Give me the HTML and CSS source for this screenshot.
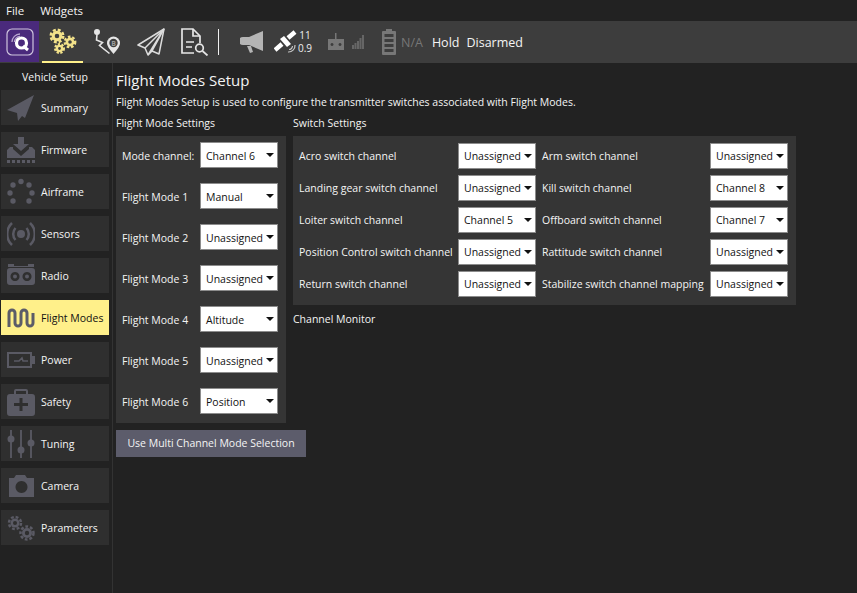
FILE: index.html
```html
<!DOCTYPE html>
<html lang="en">
<head>
  <meta charset="UTF-8">
  <meta name="viewport" content="width=device-width, initial-scale=1.0">
  <title>Flight Modes Setup</title>
  <link rel="stylesheet" href="styles.css">
</head>
<body>

<!-- Menu bar -->
<div class="menu-bar">
  <span class="menu-item">File</span>
  <span class="menu-item">Widgets</span>
</div>

<!-- Toolbar -->
<div class="toolbar">
  <div class="logo-box">
    <svg width="28" height="28" viewBox="0 0 28 28" fill="none">
      <rect x="1" y="1" width="26" height="26" rx="5" stroke="#cfc5de" stroke-width="1.2"/>
      <circle cx="15.500" cy="15" r="5" stroke="#fff" stroke-width="3.200"/>
      <path d="M17 18l5 4" stroke="#fff" stroke-width="3"/>
      <path d="M6 14a8 8 0 0 1 8-8M8.500 14a5.500 5.500 0 0 1 5.500-5.500" stroke="#b9a8cf" stroke-width="1.300"/>
    </svg>
  </div>
  <div class="tool tool-active">
    <svg width="28" height="26" viewBox="0 0 28 26" fill="none" stroke="#f3e28a">
      <circle cx="8" cy="8" r="6.200" stroke-width="2.600" stroke-dasharray="2.900 1.970"/>
      <circle cx="8" cy="8" r="3.800" stroke-width="3"/>
      <circle cx="21" cy="14" r="5.200" stroke-width="2.400" stroke-dasharray="2.500 1.860"/>
      <circle cx="21" cy="14" r="3.100" stroke-width="2.600"/>
      <circle cx="10.500" cy="20.500" r="4.400" stroke-width="2.200" stroke-dasharray="2.200 1.500"/>
      <circle cx="10.500" cy="20.500" r="2.600" stroke-width="2.400"/>
    </svg>
  </div>
  <div class="tool">
    <svg width="28" height="28" viewBox="0 0 28 28" fill="none" stroke="#e6e6e6" stroke-width="1.600">
      <circle cx="4" cy="4" r="2.200" fill="#e6e6e6"/>
      <path d="M4 6.500l-.5 5.500 6 2.500-3 3 10 8"/>
      <path d="M20.500 26c-4-4.500-6.500-8-6.500-11a6.500 6.500 0 0 1 13 0c0 3-2.500 6.500-6.500 11z" fill="#e6e6e6" stroke="none"/>
      <circle cx="20.500" cy="15" r="4.200" fill="#3d3d3d" stroke="none"/>
      <text class="pin-letter" x="20.500" y="18" text-anchor="middle">B</text>
    </svg>
  </div>
  <div class="tool">
    <svg width="28" height="28" viewBox="0 0 28 28" fill="none" stroke="#dcdcdc" stroke-width="1.500" stroke-linejoin="round">
      <path d="M27 1L1 17l7 3 3 7 4-4 7 3z"/>
      <path d="M27 1L8 20M27 1L11 27M27 1L15 23"/>
    </svg>
  </div>
  <div class="tool">
    <svg width="28" height="28" viewBox="0 0 28 28" fill="none" stroke="#e6e6e6" stroke-width="1.700">
      <path d="M19 15V8l-7-7H1v24h12"/>
      <path d="M12 1v7h7" />
      <path d="M5 14h8M5 19h6"/>
      <circle cx="18.500" cy="20" r="3.800"/>
      <path d="M21.500 23l5 4.500"/>
    </svg>
  </div>
  <div class="tool-divider"></div>
  <div class="status-icon icon-horn">
    <svg width="24" height="24" viewBox="0 0 24 24" fill="#b5b5b5">
      <path d="M23 1v20L9 15H3a2.500 2.500 0 0 1 0-8h6z"/>
      <path d="M7 16h4l2 6-3 1z"/>
    </svg>
  </div>
  <div class="status-icon icon-sat">
    <svg width="23" height="24" viewBox="0 0 23 24" fill="none">
      <path d="M1 20l7-6M14 8l7-6" stroke="#fff" stroke-width="4.500"/>
      <path d="M6 9l4-3 7 8-4 3z" fill="#fff"/>
      <path d="M21 15a6.500 6.500 0 0 1-7 7M18.500 16a3.500 3.500 0 0 1-3.500 3.500" stroke="#c4c4c4" stroke-width="1.200"/>
    </svg>
  </div>
  <div class="sat-count"><span>11</span><span>0.9</span></div>
  <div class="status-icon icon-radio">
    <svg width="18" height="18" viewBox="0 0 18 18" fill="#777">
      <path d="M8 0h1.500v6H8z"/>
      <path fill-rule="evenodd" d="M1 6h16v11H1zM5 10a1.500 1.500 0 1 0 .01 0zM13 10a1.500 1.500 0 1 0 .01 0z"/>
    </svg>
  </div>
  <div class="status-icon icon-signal">
    <svg width="12" height="14" viewBox="0 0 12 14" fill="#666">
      <path d="M0 10h2v4H0zM2.500 8h2v6h-2zM5 6h2v8H5zM7.500 3h2v11h-2zM10 0h2v14h-2z"/>
    </svg>
  </div>
  <div class="status-icon icon-batt">
    <svg width="14" height="26" viewBox="0 0 14 26" fill="#777">
      <path d="M4 0h6v2H4z"/>
      <path fill-rule="evenodd" d="M1 2h12a1 1 0 0 1 1 1v22a1 1 0 0 1-1 1H1a1 1 0 0 1-1-1V3a1 1 0 0 1 1-1zM2.500 5v3h9V5zM2.500 10v3h9v-3zM2.500 15v3h9v-3zM2.500 20v3h9v-3z"/>
    </svg>
  </div>
  <span class="batt-text">N/A</span>
  <span class="status-text status-hold">Hold</span>
  <span class="status-text">Disarmed</span>
</div>

<div class="main">

  <!-- Vehicle setup sidebar -->
  <div class="sidebar">
    <div class="sidebar-title">Vehicle Setup</div>

    <div class="side-button">
      <svg class="side-icon" viewBox="0 0 28 28"><path d="M27 1L0 16l10 3 1 8 4-5 3 2z"/></svg>
      <span>Summary</span>
    </div>
    <div class="side-button">
      <svg class="side-icon" viewBox="0 0 28 28"><path d="M11 1h6v7h5l-8 7-8-7h5z"/><path d="M0 22v-8l3-3h3v2l8 7 8-7v-2h3l3 3v8z"/><path d="M0 24h3v3H0zM5 24h3v3H5zM10 24h3v3h-3zM15 24h3v3h-3zM20 24h3v3h-3zM25 24h3v3h-3z"/></svg>
      <span>Firmware</span>
    </div>
    <div class="side-button">
      <svg class="side-icon" viewBox="0 0 28 28"><circle cx="14" cy="3.500" r="2.700"/><circle cx="22" cy="7" r="2.700"/><circle cx="25" cy="15" r="2.700"/><circle cx="22" cy="23" r="2.700"/><circle cx="6" cy="23" r="2.700"/><circle cx="3" cy="15" r="2.700"/><circle cx="6" cy="7" r="2.700"/></svg>
      <span>Airframe</span>
    </div>
    <div class="side-button">
      <svg class="side-icon" viewBox="0 0 28 28"><circle cx="14" cy="14" r="4"/><path class="side-line" d="M8.500 8a9 9 0 0 0 0 12M19.500 8a9 9 0 0 1 0 12M5 3a15 15 0 0 0 0 22M23 3a15 15 0 0 1 0 22"/></svg>
      <span>Sensors</span>
    </div>
    <div class="side-button">
      <svg class="side-icon" viewBox="0 0 28 28"><path d="M1 2h6v2h14V2h6v3H1z"/><path fill-rule="evenodd" d="M3 6h22a3 3 0 0 1 3 3v11a3 3 0 0 1-3 3H3a3 3 0 0 1-3-3V9a3 3 0 0 1 3-3zM8 10a4.500 4.500 0 1 0 .01 0zM20 10a4.500 4.500 0 1 0 .01 0z"/><circle cx="8" cy="14.500" r="2"/><circle cx="20" cy="14.500" r="2"/></svg>
      <span>Radio</span>
    </div>
    <div class="side-button side-active">
      <svg class="side-icon" viewBox="0 0 28 28"><path class="side-line side-wave" d="M2 23V9a3 3 0 0 1 6 0v10a3 3 0 0 0 6 0V9a3 3 0 0 1 6 0v10a3 3 0 0 0 6 0V9"/></svg>
      <span>Flight Modes</span>
    </div>
    <div class="side-button">
      <svg class="side-icon" viewBox="0 0 28 28"><path fill-rule="evenodd" d="M0 6h25v4h3v8h-3v4H0zM2 8v12h21V8z"/><path class="side-line side-thin" d="M7 15h5l3-3 1 3h5"/></svg>
      <span>Power</span>
    </div>
    <div class="side-button">
      <svg class="side-icon" viewBox="0 0 28 28"><path fill-rule="evenodd" d="M9 1h10a2 2 0 0 1 2 2v3h4a3 3 0 0 1 3 3v16a3 3 0 0 1-3 3H3a3 3 0 0 1-3-3V9a3 3 0 0 1 3-3h4V3a2 2 0 0 1 2-2zM9 3v3h10V3zM12.500 10v5H7v3h5.500v5h3v-5H21v-3h-5.500v-5z"/></svg>
      <span>Safety</span>
    </div>
    <div class="side-button">
      <svg class="side-icon" viewBox="0 0 28 28"><path class="side-line side-thin2" d="M4 0v28M14 0v28M24 0v28"/><circle cx="4" cy="9" r="3.500"/><circle cx="14" cy="20" r="3.500"/><circle cx="24" cy="13" r="3.500"/></svg>
      <span>Tuning</span>
    </div>
    <div class="side-button">
      <svg class="side-icon" viewBox="0 0 28 28"><path fill-rule="evenodd" d="M9 3h9l2 3h7v19H2V6h5zM14.500 9a6 6 0 1 0 .01 0z"/></svg>
      <span>Camera</span>
    </div>
    <div class="side-button">
      <svg class="side-icon" viewBox="0 0 28 28"><circle class="side-gear" cx="8" cy="9" r="6"/><circle class="side-gear" cx="20" cy="19" r="6.500"/><circle cx="8" cy="9" r="4.500"/><circle cx="20" cy="19" r="5"/><circle class="side-hole" cx="8" cy="9" r="2"/><circle class="side-hole" cx="20" cy="19" r="2.200"/></svg>
      <span>Parameters</span>
    </div>
  </div>

  <!-- Flight modes page -->
  <div class="content">
    <h1 class="page-title">Flight Modes Setup</h1>
    <p class="page-help">Flight Modes Setup is used to configure the transmitter switches associated with Flight Modes.</p>

    <div class="columns">
      <div class="column-left">
        <div class="section-title">Flight Mode Settings</div>
        <div class="panel mode-panel">
          <span>Mode channel:</span><div class="combo"><span>Channel 6</span></div>
          <span>Flight Mode 1</span><div class="combo"><span>Manual</span></div>
          <span>Flight Mode 2</span><div class="combo"><span>Unassigned</span></div>
          <span>Flight Mode 3</span><div class="combo"><span>Unassigned</span></div>
          <span>Flight Mode 4</span><div class="combo"><span>Altitude</span></div>
          <span>Flight Mode 5</span><div class="combo"><span>Unassigned</span></div>
          <span>Flight Mode 6</span><div class="combo"><span>Position</span></div>
        </div>
        <div class="multi-button">Use Multi Channel Mode Selection</div>
      </div>

      <div class="column-right">
        <div class="section-title">Switch Settings</div>
        <div class="panel switch-panel">
          <span>Acro switch channel</span><div class="combo"><span>Unassigned</span></div>
          <span>Arm switch channel</span><div class="combo"><span>Unassigned</span></div>
          <span>Landing gear switch channel</span><div class="combo"><span>Unassigned</span></div>
          <span>Kill switch channel</span><div class="combo"><span>Channel 8</span></div>
          <span>Loiter switch channel</span><div class="combo"><span>Channel 5</span></div>
          <span>Offboard switch channel</span><div class="combo"><span>Channel 7</span></div>
          <span>Position Control switch channel</span><div class="combo"><span>Unassigned</span></div>
          <span>Rattitude switch channel</span><div class="combo"><span>Unassigned</span></div>
          <span>Return switch channel</span><div class="combo"><span>Unassigned</span></div>
          <span>Stabilize switch channel mapping</span><div class="combo"><span>Unassigned</span></div>
        </div>
        <div class="section-title monitor-title">Channel Monitor</div>
      </div>
    </div>
  </div>
</div>

</body>
</html>
```
FILE: styles.css
```css
html, body {
  margin: 0;
  padding: 0;
  height: 100%;
  overflow: hidden;
}
body {
  font-family: "Open Sans", "Noto Sans", sans-serif;
  font-size: 10.5px;
  color: #f4f4f4;
  background-color: #222222;
  display: flex;
  flex-direction: column;
}

/* Menu bar */
.menu-bar {
  height: 21px;
  display: flex;
  align-items: center;
  padding-left: 6px;
  gap: 16px;
  font-size: 11.5px;
}

/* Toolbar */
.toolbar {
  height: 42px;
  background-color: #3d3d3d;
  display: flex;
  align-items: center;
}
.logo-box {
  width: 39px;
  height: 41px;
  margin-bottom: 1px;
  background-color: #4a2a7c;
  display: flex;
  align-items: center;
  justify-content: center;
}
.tool {
  width: 41px;
  height: 42px;
  margin-right: 3px;
  box-sizing: border-box;
  display: flex;
  align-items: center;
  justify-content: center;
}
.tool-active {
  margin-left: 3px;
  border-bottom: 2px solid #fff08a;
}
.pin-letter {
  font-size: 7px;
  font-weight: 700;
  fill: #9a9a9a;
  stroke: none;
}
.tool-divider {
  width: 1px;
  height: 26px;
  margin-right: 21px;
  background-color: #f0f0f0;
}
.status-icon {
  display: flex;
  align-items: center;
}
.icon-sat {
  margin-left: 10px;
}
.sat-count {
  display: flex;
  flex-direction: column;
  align-items: center;
  font-size: 10px;
  line-height: 13px;
  color: #eeeeee;
  width: 16px;
}
.icon-radio {
  margin-left: 14px;
}
.icon-signal {
  margin-left: 7px;
}
.icon-batt {
  margin-left: 18px;
}
.batt-text {
  margin-left: 5px;
  font-size: 12.5px;
  color: #777;
}
.status-text {
  margin-left: 7px;
  font-size: 12.5px;
}
.status-hold {
  margin-left: 9px;
}

/* Main area */
.main {
  flex: 1;
  display: flex;
  min-height: 0;
}
.sidebar {
  width: 113px;
  box-sizing: border-box;
  padding-left: 1px;
  border-right: 1px solid #333;
}
.sidebar-title {
  width: 108px;
  height: 27px;
  line-height: 28px;
  text-align: center;
}
.side-button {
  width: 108px;
  height: 35px;
  margin-bottom: 7px;
  background-color: #2f2f2f;
  display: flex;
  align-items: center;
  padding-left: 6px;
  box-sizing: border-box;
  gap: 6px;
}
.side-active {
  background-color: #fff08a;
  color: #111;
}
.side-icon {
  width: 28px;
  height: 28px;
  flex-shrink: 0;
  fill: #5a5a64;
}
.side-line {
  fill: none;
  stroke: #5a5a64;
  stroke-width: 2.5;
}
.side-wave {
  stroke-width: 3;
}
.side-active .side-line {
  stroke: #5c5c68;
}
.side-thin {
  stroke-width: 1.5;
}
.side-thin2 {
  stroke-width: 1.8;
}
.side-gear {
  fill: none;
  stroke: #5a5a64;
  stroke-width: 2.5;
  stroke-dasharray: 2.800 1.900;
}
.side-hole {
  fill: #2f2f2f;
}

/* Page content */
.content {
  flex: 1;
  padding-left: 3px;
}
.page-title {
  margin: 0;
  font-size: 15px;
  font-weight: 400;
  line-height: 20px;
  padding-top: 7px;
}
.page-help {
  margin: 0;
  line-height: 15px;
  padding-top: 5px;
}
.columns {
  display: flex;
  gap: 7px;
  margin-top: 6px;
}
.column-left {
  width: 170px;
}
.section-title {
  height: 20px;
  line-height: 15px;
}
.monitor-title {
  margin-top: 7px;
}
.panel {
  background-color: #353535;
  display: grid;
  align-items: center;
}
.mode-panel {
  height: 287px;
  box-sizing: border-box;
  padding: 6px 8px 8px 6px;
  grid-template-columns: 78px 78px;
  row-gap: 15px;
  grid-auto-rows: 26px;
}
.mode-panel span {
  padding-top: 2px;
}
.switch-panel {
  width: 503px;
  height: 169px;
  box-sizing: border-box;
  padding: 7px 8px 6px 6px;
  grid-template-columns: 159px 78px 174px 78px;
  row-gap: 6px;
  grid-auto-rows: 26px;
}
.switch-panel > span:nth-child(4n+3) {
  padding-left: 6px;
}
.combo {
  width: 78px;
  height: 26px;
  box-sizing: border-box;
  background-color: #fff;
  border: 1px solid #8c8c8c;
  color: #111;
  display: flex;
  align-items: center;
  padding-left: 5px;
  position: relative;
}
.combo::after {
  content: "";
  position: absolute;
  right: 3px;
  top: 10px;
  border-left: 4px solid transparent;
  border-right: 4px solid transparent;
  border-top: 4px solid #111;
}
.multi-button {
  width: 190px;
  height: 27px;
  margin-top: 7px;
  background-color: #5c5c6b;
  line-height: 27px;
  text-align: center;
}
```
